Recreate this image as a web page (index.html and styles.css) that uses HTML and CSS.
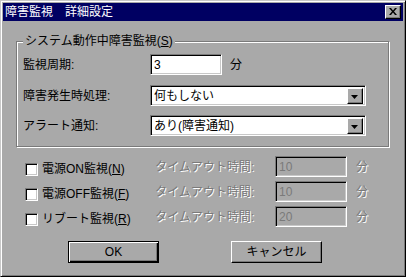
FILE: index.html
```html
<!DOCTYPE html>
<html lang="ja">
<head>
<meta charset="utf-8">
<title>障害監視 詳細設定</title>
<link rel="stylesheet" href="styles.css">
</head>
<body>
<div class="dialog">
  <div class="titlebar">
    <span class="title">障害監視　詳細設定</span>
    <span class="close"><svg width="8" height="7" viewBox="0 0 8 7"><path d="M0 0h2l2 2.5L6 0h2L5 3.5 8 7H6L4 4.5 2 7H0l3-3.5z" fill="#000"/></svg></span>
  </div>
  <div class="body">
    <div class="group">
      <div class="legend">システム動作中障害監視(<u>S</u>)</div>
      <div class="row r1">
        <span class="lbl">監視周期:</span>
        <div class="field"><div class="edit">3</div><span class="unit">分</span></div>
      </div>
      <div class="row r2">
        <span class="lbl">障害発生時処理:</span>
        <div class="combo"><span class="ctext">何もしない</span><span class="dd"><svg width="7" height="4" viewBox="0 0 7 4"><path d="M0 0h7L3.5 4z" fill="#000"/></svg></span></div>
      </div>
      <div class="row r3">
        <span class="lbl">アラート通知:</span>
        <div class="combo"><span class="ctext">あり(障害通知)</span><span class="dd"><svg width="7" height="4" viewBox="0 0 7 4"><path d="M0 0h7L3.5 4z" fill="#000"/></svg></span></div>
      </div>
    </div>
    <div class="checks">
      <div class="crow">
        <span class="cbl"><span class="cb"></span><span>電源ON監視(<u>N</u>)</span></span>
        <span class="dis">タイムアウト時間:</span>
        <div class="edit dedit">10</div>
        <span class="unit dis">分</span>
      </div>
      <div class="crow">
        <span class="cbl"><span class="cb"></span><span>電源OFF監視(<u>F</u>)</span></span>
        <span class="dis">タイムアウト時間:</span>
        <div class="edit dedit">10</div>
        <span class="unit dis">分</span>
      </div>
      <div class="crow">
        <span class="cbl"><span class="cb"></span><span>リブート監視(<u>R</u>)</span></span>
        <span class="dis">タイムアウト時間:</span>
        <div class="edit dedit">20</div>
        <span class="unit dis">分</span>
      </div>
    </div>
    <div class="buttons">
      <button class="btn default">OK</button>
      <button class="btn">キャンセル</button>
    </div>
  </div>
</div>
</body>
</html>
```
FILE: styles.css
```css
html, body {
  margin: 0;
  padding: 0;
  background: #a9a9a9;
}
body {
  font-family: "Liberation Sans", "Noto Sans CJK JP", sans-serif;
  font-size: 12px;
  line-height: 14px;
  color: #000;
}
.dialog {
  width: 406px;
  height: 277px;
  box-sizing: border-box;
  background: #a9a9a9;
  border: 1px solid;
  border-color: #c8c8c8 #000 #000 #c8c8c8;
  box-shadow: inset 1px 1px 0 #fff, inset -1px -1px 0 #7a7a7a;
  padding: 2px;
  display: flex;
  flex-direction: column;
}
.titlebar {
  height: 18px;
  background: #000062;
  color: #fff;
  display: flex;
  align-items: center;
  justify-content: space-between;
  padding: 0 2px 0 2px;
}
.title {
  font-size: 12px;
  line-height: 14px;
}
.close {
  width: 16px;
  height: 14px;
  box-sizing: border-box;
  background: #a9a9a9;
  border: 1px solid;
  border-color: #fff #000 #000 #fff;
  box-shadow: inset -1px -1px 0 #7a7a7a;
  display: flex;
  align-items: center;
  justify-content: center;
  padding: 0 1px 1px 0;
}
.close svg { display: block; }
.body {
  padding: 20px 0 0 13px;
}
.group {
  width: 373px;
  height: 106px;
  box-sizing: border-box;
  border: 1px solid #7a7a7a;
  box-shadow: 1px 1px 0 #fff, inset 1px 1px 0 #fff;
  padding: 0 22px 0 6px;
}
.legend {
  width: fit-content;
  margin-top: -8px;
  padding: 0 2px;
  background: #a9a9a9;
  line-height: 14px;
}
.row {
  display: grid;
  grid-template-columns: 127px 216px;
  align-items: center;
  height: 21px;
}
.r1 { margin-top: 6px; }
.r2 { margin-top: 10px; }
.r3 { margin-top: 9px; }
.field {
  display: flex;
  align-items: center;
}
.edit {
  width: 72px;
  height: 21px;
  box-sizing: border-box;
  background: #fff;
  border: 1px solid;
  border-color: #7a7a7a #fff #fff #7a7a7a;
  box-shadow: inset 1px 1px 0 #000, inset -1px -1px 0 #c8c8c8;
  padding: 3px 0 0 3px;
  line-height: 14px;
}
.unit {
  margin-left: 8px;
}
.combo {
  height: 21px;
  box-sizing: border-box;
  background: #fff;
  border: 1px solid;
  border-color: #7a7a7a #fff #fff #7a7a7a;
  box-shadow: inset 1px 1px 0 #000, inset -1px -1px 0 #c8c8c8;
  padding: 2px 2px 1px 3px;
  display: flex;
  align-items: center;
  justify-content: space-between;
}
.ctext { line-height: 14px; }
.dd {
  width: 16px;
  height: 16px;
  box-sizing: border-box;
  background: #a9a9a9;
  border: 1px solid;
  border-color: #fff #000 #000 #fff;
  box-shadow: inset -1px -1px 0 #7a7a7a;
  display: flex;
  align-items: center;
  justify-content: center;
  padding: 1px 1px 0 0;
}
.dd svg { display: block; }
.checks {
  margin-top: 9px;
  padding-left: 9px;
  display: flex;
  flex-direction: column;
  gap: 4px;
}
.crow {
  display: grid;
  grid-template-columns: 130px 120px 72px auto;
  align-items: center;
  height: 21px;
}
.cbl {
  display: flex;
  align-items: center;
  gap: 4px;
  margin-top: 5px;
  white-space: nowrap;
}
.cb {
  width: 13px;
  height: 13px;
  box-sizing: border-box;
  background: #fff;
  border: 1px solid;
  border-color: #7a7a7a #fff #fff #7a7a7a;
  box-shadow: inset 1px 1px 0 #000, inset -1px -1px 0 #c8c8c8;
}
.dis {
  color: #7a7a7a;
  text-shadow: 1px 1px 0 #fff;
}
.crow .unit { margin-left: 9px; }
.dedit {
  background: #a9a9a9;
  color: #7a7a7a;
}
.buttons {
  margin-top: 14px;
  padding-left: 52px;
  display: flex;
  gap: 72px;
}
.btn {
  width: 91px;
  height: 22px;
  box-sizing: border-box;
  font-family: "Liberation Sans", "Noto Sans CJK JP", sans-serif;
  font-size: 12px;
  line-height: 14px;
  color: #000;
  background: #a9a9a9;
  border: 1px solid;
  border-color: #fff #000 #000 #fff;
  box-shadow: inset -1px -1px 0 #7a7a7a;
  padding: 0;
  margin: 0;
}
.btn.default {
  border-color: #000;
  box-shadow: inset 1px 1px 0 #fff, inset -1px -1px 0 #000, inset -2px -2px 0 #7a7a7a;
}
u { text-decoration: underline; }
```
